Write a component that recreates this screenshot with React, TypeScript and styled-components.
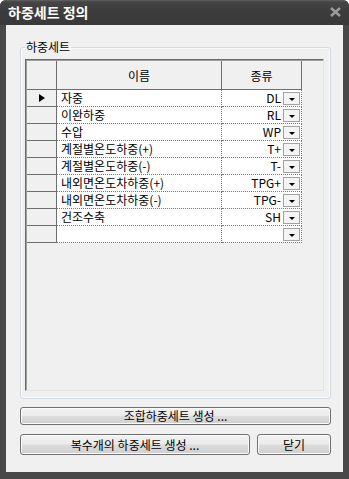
import React from "react";
import styled, { createGlobalStyle } from "styled-components";

const FONT = `"Noto Sans CJK KR", "Noto Sans", sans-serif`;

const GlobalStyle = createGlobalStyle`
  html, body {
    margin: 0;
    padding: 0;
    background: #ffffff;
  }
  body {
    font-family: ${FONT};
    font-size: 12px;
    color: #000;
  }
`;

const Window = styled.div`
  width: 349px;
  height: 479px;
  box-sizing: border-box;
  background: #484848;
  border-radius: 6px 6px 0 0;
  display: flex;
  flex-direction: column;
  padding: 0 6px 7px 6px;
`;

const TitleBar = styled.div`
  height: 25px;
  margin: 0 -6px;
  padding: 0 8px 1px 8px;
  box-sizing: border-box;
  display: flex;
  align-items: center;
  justify-content: space-between;
  border-radius: 6px 6px 0 0;
  background: linear-gradient(#626262 0, #454545 2px, #3c3c3c 12px, #393939 100%);
`;

const Title = styled.span`
  color: #ffffff;
  font-weight: bold;
  font-size: 14px;
  line-height: 16px;
`;

const Body = styled.div`
  flex: 1;
  background: #f0f0f0;
  display: flex;
  flex-direction: column;
  padding: 15px 12px 17px 14px;
`;

const Group = styled.fieldset`
  flex: 1;
  margin: 0;
  padding: 5px 6px 7px 4px;
  border: 1px solid #d3dae2;
  border-radius: 3px;
  box-shadow: inset 0 0 0 1px #fbfbfb;
  display: flex;
  flex-direction: column;
  min-height: 0;
`;

const Legend = styled.legend`
  padding: 0 1px;
  font-size: 12px;
  line-height: 14px;
`;

const Grid = styled.div`
  flex: 1;
  border: 1px solid;
  border-color: #696969 #e3e3e3 #e3e3e3 #696969;
  box-shadow: inset 1px 1px 0 #a0a0a0;
  padding: 1px 0 0 1px;
  display: grid;
  grid-template-columns: 30px 165px 80px;
  grid-template-rows: 29px;
  grid-auto-rows: 17px;
  align-content: start;
`;

const HeadCell = styled.div`
  box-sizing: border-box;
  background: #f0f0f0;
  border-right: 1px solid #6d6d6d;
  border-bottom: 1px solid #6d6d6d;
  display: flex;
  align-items: center;
  justify-content: center;
`;

const RowHead = styled.div`
  box-sizing: border-box;
  background: #f0f0f0;
  border-right: 1px solid #6d6d6d;
  border-bottom: 1px solid #6d6d6d;
  display: flex;
  align-items: center;
  justify-content: center;
`;

const Cell = styled.div<{ $right?: boolean }>`
  box-sizing: border-box;
  background: #ffffff;
  border-right: 1px dotted #7a7a7a;
  border-bottom: 1px dotted #7a7a7a;
  display: flex;
  align-items: center;
  justify-content: ${(p) => (p.$right ? "flex-end" : "flex-start")};
  padding: ${(p) => (p.$right ? "0 1px 0 0" : "0 0 0 4px")};
  gap: 2px;
  line-height: 16px;
  white-space: nowrap;
`;

const DropButton = styled.span`
  width: 17px;
  height: 13px;
  box-sizing: border-box;
  border: 1px solid #a2a2a2;
  background: #f4f4f4;
  display: flex;
  align-items: center;
  justify-content: center;
  padding-top: 2px;

  &::after {
    content: "";
    border-left: 3px solid transparent;
    border-right: 3px solid transparent;
    border-top: 3px solid #000;
  }
`;

const Footer = styled.div`
  display: flex;
  flex-direction: column;
  gap: 9px;
  margin-top: 8px;
`;

const ButtonRow = styled.div`
  display: flex;
  gap: 7px;
`;

const Button = styled.button<{ $width?: number }>`
  height: 21px;
  flex: ${(p) => (p.$width ? `0 0 ${p.$width}px` : "1")};
  font-family: ${FONT};
  font-size: 12px;
  color: #000;
  border: 1px solid #707070;
  border-radius: 3px;
  box-shadow: inset 0 0 0 1px #fbfbfb;
  background: linear-gradient(#f2f2f2 0%, #ebebeb 48%, #dddddd 52%, #cfcfcf 100%);
  padding: 0;
  line-height: 16px;
`;

const rows = [
  { name: "자중", type: "DL" },
  { name: "이완하중", type: "RL" },
  { name: "수압", type: "WP" },
  { name: "계절별온도하중(+)", type: "T+" },
  { name: "계절별온도하중(-)", type: "T-" },
  { name: "내외면온도차하중(+)", type: "TPG+" },
  { name: "내외면온도차하중(-)", type: "TPG-" },
  { name: "건조수축", type: "SH" },
  { name: "", type: "" },
];

const App = () => {
  return (
    <>
      <GlobalStyle />
      <Window>
        <TitleBar>
          <Title>하중세트 정의</Title>
          <svg width="11" height="10" viewBox="0 0 11 10">
            <path d="M1 1 L10 9 M10 1 L1 9" stroke="#9c9c9c" strokeWidth="2.4" />
          </svg>
        </TitleBar>
        <Body>
          <Group>
            <Legend>하중세트</Legend>
            <Grid>
              <HeadCell />
              <HeadCell>이름</HeadCell>
              <HeadCell>종류</HeadCell>
              {rows.map((r, i) => (
                <React.Fragment key={i}>
                  <RowHead>
                    {i === 0 && (
                      <svg width="6" height="8" viewBox="0 0 6 8">
                        <polygon points="0,0 6,4 0,8" fill="#000" />
                      </svg>
                    )}
                  </RowHead>
                  <Cell>{r.name}</Cell>
                  <Cell $right>
                    {r.type}
                    <DropButton />
                  </Cell>
                </React.Fragment>
              ))}
            </Grid>
          </Group>
          <Footer>
            <Button>조합하중세트 생성 ...</Button>
            <ButtonRow>
              <Button>복수개의 하중세트 생성 ...</Button>
              <Button $width={74}>닫기</Button>
            </ButtonRow>
          </Footer>
        </Body>
      </Window>
    </>
  );
};

export default App;
